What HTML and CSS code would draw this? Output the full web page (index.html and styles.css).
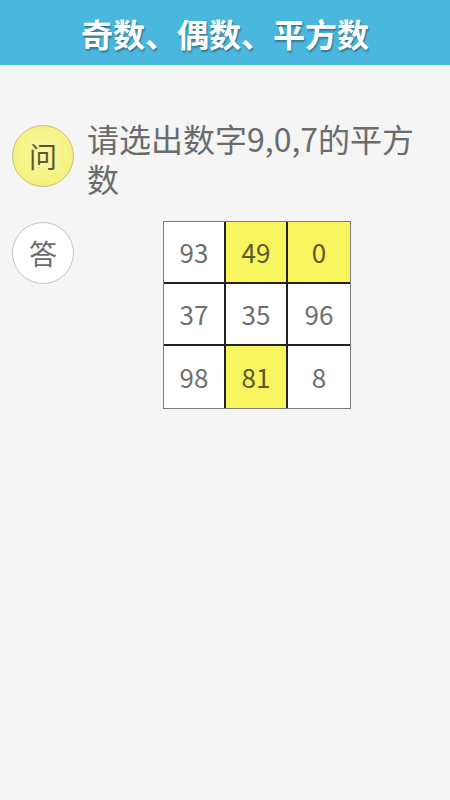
FILE: index.html
```html
<!DOCTYPE html>
<html lang="zh">
<head>
<meta charset="utf-8">
<link rel="stylesheet" href="styles.css">
</head>
<body>
<header class="bar"><h1 class="title">奇数、偶数、平方数</h1></header>
<main class="content">
  <section class="row q-row">
    <div class="badge badge-q">问</div>
    <p class="question">请选出数字9,0,7的平方数</p>
  </section>
  <section class="row a-row">
    <div class="badge badge-a">答</div>
    <div class="grid">
      <div class="cell">93</div>
      <div class="cell hl">49</div>
      <div class="cell hl">0</div>
      <div class="cell">37</div>
      <div class="cell">35</div>
      <div class="cell">96</div>
      <div class="cell">98</div>
      <div class="cell hl">81</div>
      <div class="cell">8</div>
    </div>
  </section>
</main>
</body>
</html>
```
FILE: styles.css
```css
* { box-sizing: border-box; }
html, body { margin: 0; padding: 0; }
body {
  width: 450px;
  height: 800px;
  background: #f5f5f5;
  font-family: "Noto Sans CJK SC", sans-serif;
  color: #6b6b6b;
}
.bar {
  height: 65px;
  background: #4ab8de;
  display: flex;
  align-items: center;
  justify-content: center;
}
.title {
  margin: 0;
  font-size: 32px;
  line-height: 40px;
  font-weight: 700;
  color: #ffffff;
  text-shadow: 1px 2px 2px rgba(0, 0, 0, 0.35);
}
.content {
  padding: 60px 26px 0 12px;
}
.row {
  display: flex;
  align-items: flex-start;
}
.badge {
  flex: 0 0 62px;
  width: 62px;
  height: 62px;
  border-radius: 50%;
  display: flex;
  align-items: center;
  justify-content: center;
  font-size: 28px;
  line-height: 1;
}
.badge-q {
  background: radial-gradient(circle at 50% 45%, #fbf9a8 0%, #f6f384 55%, #efea76 100%);
  border: 1px solid #c6c08a;
  color: #5b5932;
}
.badge-a {
  background: #ffffff;
  border: 1px solid #c4c4c4;
  color: #6b6b6b;
}
.question {
  margin: -7px 0 0 13px;
  font-size: 32px;
  line-height: 40px;
  color: #6b6b6b;
}
.a-row {
  margin-top: 24px;
}
.grid {
  margin-left: 89px;
  margin-top: -1px;
  display: grid;
  grid-template-columns: repeat(3, 62px);
  grid-template-rows: repeat(3, 62px);
  border: 1px solid #7a7a7a;
  background: #ffffff;
}
.cell {
  display: flex;
  align-items: center;
  justify-content: center;
  font-size: 26px;
  line-height: 1;
  color: #6e6e6e;
  background: #ffffff;
  border-right: 2px solid #222;
  border-bottom: 2px solid #222;
}
.cell:nth-child(3n) { border-right: none; }
.cell:nth-child(n+7) { border-bottom: none; }
.cell.hl {
  background: #f8f55e;
  color: #5b5932;
}
```
